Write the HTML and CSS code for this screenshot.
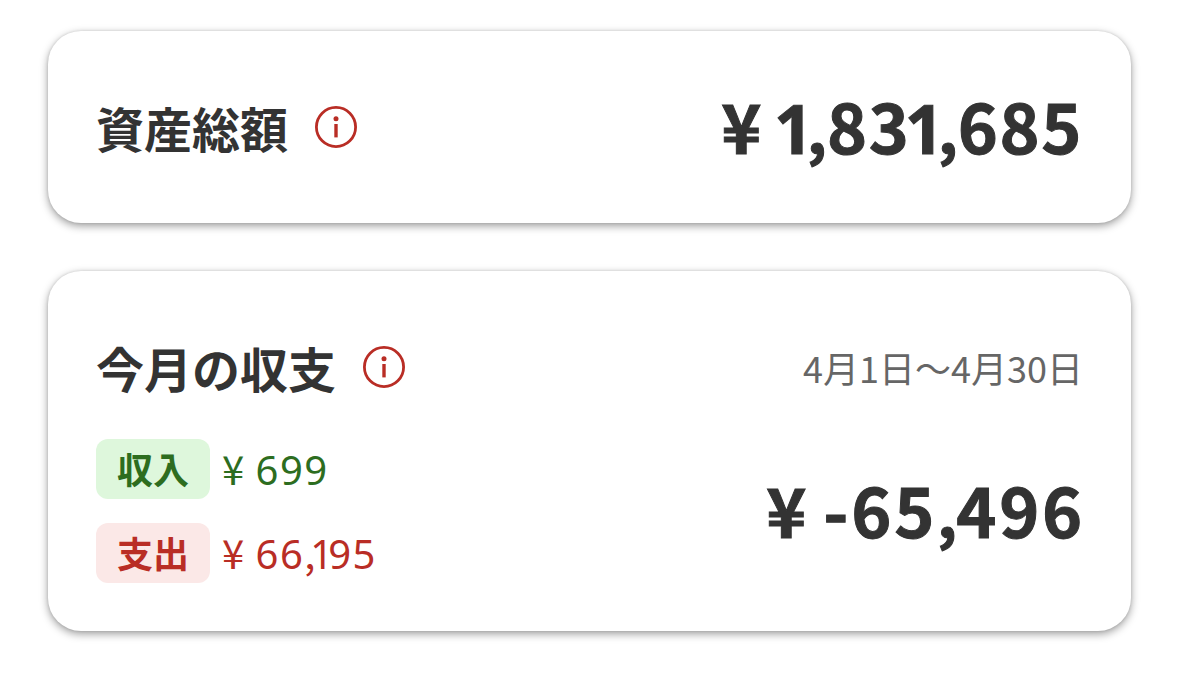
FILE: index.html
```
<!DOCTYPE html>
<html lang="ja">
<head>
<meta charset="UTF-8">
<meta name="viewport" content="width=device-width, initial-scale=1.0">
<title>資産総額</title>
<link rel="stylesheet" href="styles.css">
</head>
<body>
    <div class="container">
        <div class="card total">
            <h2>資産総額
                <svg class="info" viewBox="0 0 42 42">
                    <circle cx="21" cy="21" r="19.6" fill="none" stroke="currentColor" stroke-width="2.8"/>
                    <circle cx="21" cy="12.8" r="2.5" fill="currentColor"/>
                    <path d="M21 18v13.4" stroke="currentColor" stroke-width="3.4"/>
                </svg>
            </h2>
            <div class="amount"><span class="yen">¥</span><span class="one">1</span><span class="comma">,</span>8<span class="tight">3</span><span class="one">1</span><span class="comma">,</span>685</div>
        </div>

        <div class="card balance">
            <div class="balance-header">
                <h2>今月の収支
                    <svg class="info" viewBox="0 0 42 42">
                        <circle cx="21" cy="21" r="19.6" fill="none" stroke="currentColor" stroke-width="2.8"/>
                        <circle cx="21" cy="12.8" r="2.5" fill="currentColor"/>
                        <path d="M21 18v13.4" stroke="currentColor" stroke-width="3.4"/>
                    </svg>
                </h2>
                <div class="period">4月1日～4月30日</div>
            </div>
            <div class="balance-body">
                <div class="list">
                    <div class="item income">
                        <span class="badge">収入</span>
                        <span class="value"><span class="small-yen">¥</span>699</span>
                    </div>
                    <div class="item expense">
                        <span class="badge">支出</span>
                        <span class="value"><span class="small-yen">¥</span>66<span class="small-comma">,</span><span class="small-one">1</span>95</span>
                    </div>
                </div>
                <div class="amount wide"><span class="yen">¥</span>-65<span class="comma">,</span>496</div>
            </div>
        </div>
    </div>
</body>
</html>
```
FILE: styles.css
```
* {
    box-sizing: border-box;
}

body {
    margin: 0;
    font-family: "Noto Sans CJK JP", sans-serif;
    color: #333;
    background-color: #fff;
}

.container {
    display: flex;
    flex-direction: column;
    gap: 48px;
    padding: 31px 48px;
}

.card {
    background-color: #fff;
    border-radius: 33px;
    box-shadow: 0 3px 8px rgba(0, 0, 0, 0.38), 0 0 3px rgba(0, 0, 0, 0.12);
    padding: 0 48px;
}

.total {
    height: 192px;
    display: flex;
    justify-content: space-between;
    align-items: center;
}

.balance {
    height: 360px;
    padding-top: 48px;
}

h2 {
    display: flex;
    align-items: center;
    gap: 27px;
    margin: 0;
    font-size: 48px;
    font-weight: bold;
    line-height: 96px;
}

.info {
    width: 42px;
    height: 42px;
    color: #b92d25;
}

.amount {
    font-size: 68px;
    font-weight: bold;
    line-height: 96px;
    padding-bottom: 2px;
    letter-spacing: 1.6px;
    white-space: nowrap;
    -webkit-text-stroke: 1px #333;
}

.amount.wide {
    letter-spacing: 2.8px;
    margin-right: -2px;
}

.yen {
    margin-right: 11px;
}

.wide .yen {
    margin-right: 14px;
}

.tight {
    letter-spacing: -4px;
}

.one {
    font-family: "Open Sans", sans-serif;
    letter-spacing: -6px;
}

.comma {
    font-size: 62px;
    letter-spacing: 0;
}

.wide .comma {
    letter-spacing: -1px;
}

.balance-header,
.balance-body {
    display: flex;
    justify-content: space-between;
    align-items: center;
}

.period {
    font-size: 36px;
    color: #666;
}

.balance-body {
    margin-top: 24px;
    height: 144px;
}

.list {
    display: flex;
    flex-direction: column;
    gap: 24px;
}

.item {
    display: flex;
    align-items: center;
    gap: 12px;
    height: 60px;
}

.badge {
    width: 114px;
    border-radius: 12px;
    font-size: 36px;
    font-weight: bold;
    line-height: 58px;
    padding-bottom: 2px;
    text-align: center;
}

.value {
    font-family: "Noto Sans", sans-serif;
    font-size: 40px;
    line-height: 60px;
    letter-spacing: 1.4px;
}

.small-yen {
    font-family: "Noto Sans CJK JP", sans-serif;
    margin-right: 10px;
}

.small-comma {
    font-family: "Noto Sans CJK JP", sans-serif;
    letter-spacing: -5px;
}

.small-one {
    letter-spacing: -5px;
}

.income {
    color: #2d6d1f;
}

.income .badge {
    background-color: #def7dc;
}

.expense {
    color: #b92d25;
}

.expense .badge {
    background-color: #fbe8e7;
}
```
